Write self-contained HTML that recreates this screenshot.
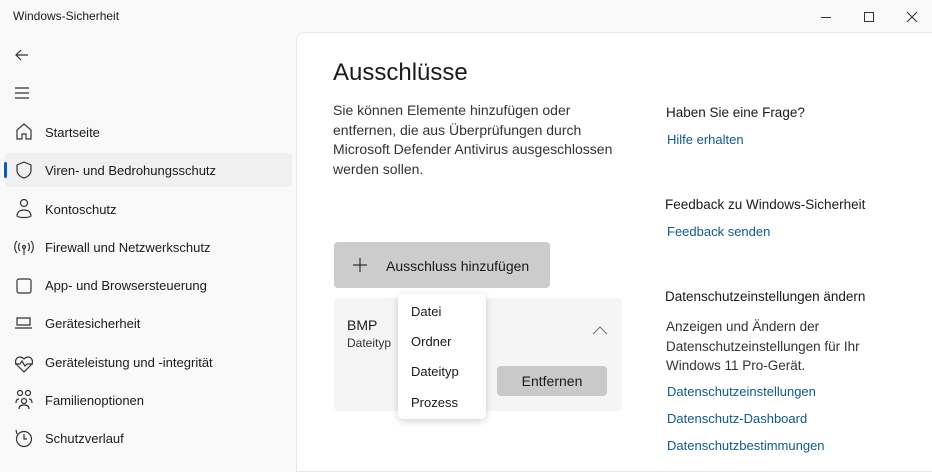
<!DOCTYPE html>
<html><head><meta charset="utf-8"><style>
*{margin:0;padding:0;box-sizing:border-box}
body{width:932px;height:461px;overflow:hidden;background:#f9f9f9;font-family:"Segoe UI","Liberation Sans",sans-serif;color:#1a1a1a;position:relative}
.a{position:absolute;white-space:nowrap}
.nav{font-size:13px;color:#1b1b1b}
.content{position:absolute;left:296px;top:32px;width:640px;height:440px;background:#fff;border:1px solid #e6e6e6;border-top-left-radius:8px}
.p{font-size:14px;color:#333;line-height:19.5px}
.lk{font-size:13px;color:#0e5a8a}
.h{font-size:13.5px;color:#1a1a1a}
</style></head><body>
<div class="a" style="left:13px;top:9px;font-size:12px">Windows-Sicherheit</div>
<svg class="a" style="left:818px;top:10px" width="100" height="14" fill="none" stroke="#333" stroke-width="1"><path d="M3 7.5h10"/><rect x="46.5" y="2.5" width="9" height="9"/><path d="M89 2l10 10M99 2l-10 10"/></svg>
<svg class="a" style="left:14px;top:47px" width="16" height="16" fill="none" stroke="#333" stroke-width="1.2"><path d="M14 8H2M7 3L2 8l5 5"/></svg>
<svg class="a" style="left:14px;top:86px" width="16" height="14" fill="none" stroke="#333" stroke-width="1.2"><path d="M1 2h14M1 7h14M1 12h14"/></svg>
<div class="a" style="left:5px;top:153px;width:287px;height:34px;background:#f0f0f0;border-radius:4px"></div>
<div class="a" style="left:4px;top:162px;width:3px;height:16px;background:#0a5fb4;border-radius:2px"></div>
<svg class="a" style="left:14px;top:122px" width="20" height="340" fill="none" stroke="#333" stroke-width="1.2">
<path d="M3 17V8l7-6 7 6v9h-5v-5h-4v5z"/>
<path d="M10 40l7 3v5c0 4-3 7-7 8-4-1-7-4-7-8v-5z"/>
<circle cx="10" cy="81" r="3.5"/><path d="M3 94c0-4 3-6 7-6s7 2 7 6c-2 2-12 2-14 0z"/>
<circle cx="10" cy="125" r="1.5"/><path d="M10 127v6M6 121c-2 2-2 6 0 8M14 121c2 2 2 6 0 8M3 119c-3 3-3 9 0 12M17 119c3 3 3 9 0 12"/>
<rect x="3" y="157" width="14" height="14" rx="2"/>
<path d="M3 196h13v7H3zM1 206h17"/>
<path d="M10 250l-7-7c-3-3-1-8 3-8 2 0 3 1 4 2 1-1 2-2 4-2 4 0 6 5 3 8zM1 242h5l2-3 3 5 2-2h6"/>
<circle cx="6" cy="271" r="2.5"/><circle cx="14" cy="271" r="2.5"/><circle cx="10" cy="279" r="2.5"/><path d="M2 281c0-3 1-4 3-4M18 281c0-3-1-4-3-4M5 287c0-3 2-4 5-4s5 1 5 4"/>
<circle cx="10" cy="317" r="7.5"/><path d="M10 312v5h3M3 312l-1-4"/>
</svg>
<div class="a nav" style="left:45px;top:125px">Startseite</div>
<div class="a nav" style="left:45px;top:163px">Viren- und Bedrohungsschutz</div>
<div class="a nav" style="left:45px;top:202px">Kontoschutz</div>
<div class="a nav" style="left:45px;top:240px">Firewall und Netzwerkschutz</div>
<div class="a nav" style="left:45px;top:278px">App- und Browsersteuerung</div>
<div class="a nav" style="left:45px;top:316px">Gerätesicherheit</div>
<div class="a nav" style="left:45px;top:355px">Geräteleistung und -integrität</div>
<div class="a nav" style="left:45px;top:393px">Familienoptionen</div>
<div class="a nav" style="left:45px;top:431px">Schutzverlauf</div>
<div class="content"></div>
<div class="a" style="left:333px;top:59px;font-size:24px;color:#1a1a1a">Ausschlüsse</div>
<div class="a p" style="left:333px;top:101px">Sie können Elemente hinzufügen oder<br>entfernen, die aus Überprüfungen durch<br>Microsoft Defender Antivirus ausgeschlossen<br>werden sollen.</div>
<div class="a" style="left:334px;top:242px;width:216px;height:46px;background:#cccccc;border-radius:4px"></div>
<svg class="a" style="left:352px;top:257px" width="16" height="16" stroke="#333" stroke-width="1.2"><path d="M8 1v14M1 8h14"/></svg>
<div class="a" style="left:386px;top:258px;font-size:14px">Ausschluss hinzufügen</div>
<div class="a" style="left:334px;top:298px;width:288px;height:113px;background:#f5f5f5;border-radius:4px"></div>
<div class="a" style="left:347px;top:317px;font-size:14px">BMP</div>
<div class="a" style="left:347px;top:336px;font-size:12px;color:#333">Dateityp</div>
<svg class="a" style="left:592px;top:326px" width="16" height="10" fill="none" stroke="#777"><path d="M1 8l7-7 7 7"/></svg>
<div class="a" style="left:497px;top:366px;width:110px;height:30px;background:#c9c9c9;border-radius:4px;text-align:center;line-height:31px;font-size:14px">Entfernen</div>
<div class="a" style="left:398px;top:294px;width:88px;height:125px;background:#fff;border-radius:5px;box-shadow:0 2px 8px rgba(0,0,0,.18)"></div>
<div class="a" style="left:411px;top:304px;font-size:13px">Datei</div>
<div class="a" style="left:411px;top:334px;font-size:13px">Ordner</div>
<div class="a" style="left:411px;top:364px;font-size:13px">Dateityp</div>
<div class="a" style="left:411px;top:395px;font-size:13px">Prozess</div>
<div class="a h" style="left:666px;top:105px">Haben Sie eine Frage?</div>
<div class="a lk" style="left:667px;top:132px">Hilfe erhalten</div>
<div class="a h" style="left:665px;top:197px">Feedback zu Windows-Sicherheit</div>
<div class="a lk" style="left:667px;top:224px">Feedback senden</div>
<div class="a h" style="left:665px;top:289px">Datenschutzeinstellungen ändern</div>
<div class="a p" style="left:666px;top:317px;font-size:13.5px">Anzeigen und Ändern der<br>Datenschutzeinstellungen für Ihr<br>Windows 11 Pro-Gerät.</div>
<div class="a lk" style="left:667px;top:384px">Datenschutzeinstellungen</div>
<div class="a lk" style="left:667px;top:411px">Datenschutz-Dashboard</div>
<div class="a lk" style="left:667px;top:438px">Datenschutzbestimmungen</div>
</body></html>
